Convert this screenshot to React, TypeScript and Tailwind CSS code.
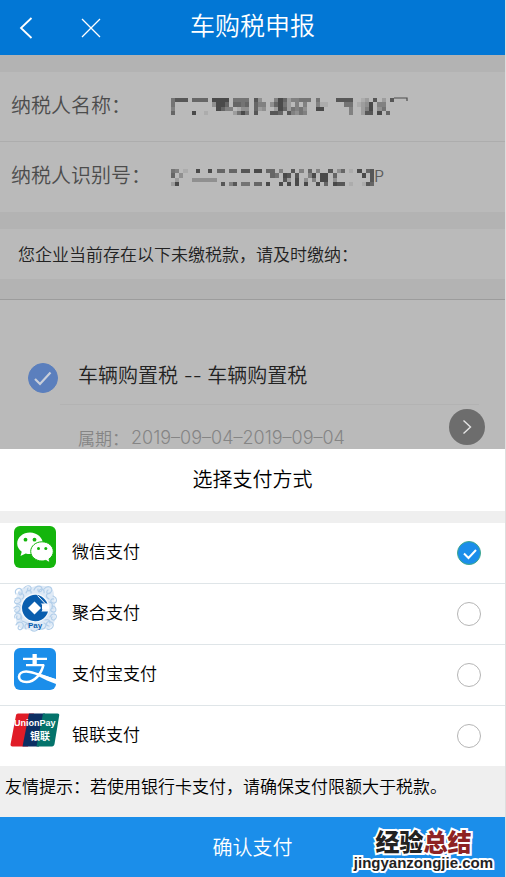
import { useState } from 'react';
import type { ReactNode } from 'react';

type MethodId = 'wechat' | 'ccb' | 'alipay' | 'unionpay';

// each digit is the darkness of one cell, a dot is an empty cell
const maskedName = [
  '5777.6666.8888.5555.73...486244555.5....7777..12.7.2.7',
  '5.........3886.6656.644.36852.4.4..411....55.1238.44..',
  '4..........8644.133.623..28625453..88......4..248.35..',
  '6....8..1......2585.7...776.74354..........4..277.8.6.',
];

const maskedNumber = [
  '54.1..8..8.66.66.77.88.66.4..7.4.6.4..7.36.1.8.67',
  '6.3.....................65.87.7..48.88.6......8.7',
  '.2...333333................72.8.3.4.88.3........7',
  '28..........7.47.55.66.8..8.8.8.8..8.6.877.1..176',
];

function Mosaic({ rows, className }: { rows: string[]; className: string }) {
  return (
    <svg
      viewBox={`0 0 ${rows[0].length} ${rows.length}`}
      preserveAspectRatio="none"
      shapeRendering="crispEdges"
      className={className}
      aria-hidden="true"
    >
      {rows.map((row, y) =>
        row.split('').map((c, x) =>
          c === '.' ? null : (
            <rect key={`${x}-${y}`} x={x} y={y} width="1" height="1" fill="#2e2e2e" fillOpacity={Number(c) * 0.1} />
          )
        )
      )}
    </svg>
  );
}

function WechatIcon() {
  return (
    <svg viewBox="0 0 42 42" className="w-[42px] h-[42px]" aria-hidden="true">
      <rect width="42" height="42" rx="6" fill="#14b50c" />
      <path
        d="M16 6.500C9 6.500 3.200 11.400 3.200 17.500c0 3.400 1.700 6.200 4.500 8.200L6.500 30l5.200-2.600c1.300.4 2.800.6 4.300.6 7 0 12.800-4.600 12.800-10.500S23 6.500 16 6.500Z"
        fill="#fff"
      />
      <path
        d="M28 15.800c-6.200 0-11.300 4.200-11.300 9.600S21.800 35 28 35c1.300 0 2.600-.2 3.800-.6l4.200 2.400-1-3.900c2.600-1.700 4.300-4.400 4.300-7.500 0-5.400-5-9.600-11.300-9.600Z"
        fill="#fff"
        stroke="#14b50c"
        strokeWidth="1"
      />
      <g fill="#14b50c">
        <circle cx="11.500" cy="13.700" r="1.900" />
        <circle cx="20.500" cy="13.700" r="1.900" />
        <circle cx="24.500" cy="22.500" r="1.500" />
        <circle cx="31.800" cy="22.500" r="1.500" />
      </g>
    </svg>
  );
}

function CcbIcon() {
  return (
    <svg viewBox="0 0 46 48" className="w-[46px] h-[48px]" aria-hidden="true">
      <path
        d="M8 6c4-4 8-2 12-3s10-2 16 0 6 5 6 9 2 8 1 12 1 8 0 12-4 9-9 9-9 2-14 1-10 0-13-3-3-7-3-11-1-8 0-12-1-10 4-14Z"
        fill="#dfeaf6"
      />
      <g fill="none" stroke="#b3cfea" strokeWidth="1.200" strokeLinecap="round">
        <path d="M4 10c-3-5 5-8 6-3s-4 5-3 1M12 4c3-4 8-2 7 1s-5 2-3-1M22 6c2-5 8-5 8-1s-5 3-4 0M32 5c4-5 10-1 7 3s-6 0-3-2" />
        <path d="M3 15c5-3 8 2 4 4s-6-2-3-3M2 24c4-4 8 0 5 3s-6 0-3-2M3 34c-2-5 6-7 6-2s-6 4-4 0M6 29c3 1 5 4 3 7" />
        <path d="M4 41c2-5 9-3 7 2s-7 2-4-1M14 45c-3-4 2-8 5-4M29 45c4 1 7-5 3-6M35 45c5 2 9-5 4-7s-6 4-2 4" />
        <path d="M41 12c5 2 4 8 0 7s-2-5 1-4M40 22c5 0 5 7 1 6s-2-4 0-4M38 33c2-5 8-3 6 1s-6 1-4-1M8 9c4 0 5 4 2 6M38 9c-4 0-5 4-1 6M10 37c3 1 5 1 6 4M33 36c3-1 5 0 5 3" />
        <path d="M14 9c1-4 6-3 5 0M27 8c0-4 6-4 5 1M5 20c4 0 5 3 4 5M37 18c3 0 4 3 3 6M19 46c3 2 6 1 7-1" />
      </g>
      <circle cx="23" cy="24" r="14.500" fill="#fff" fillOpacity="0.700" />
      {/* ring, open on the right, with a square hole */}
      <path
        d="M29 12.200A13.200 13.200 0 1 0 36 27.500h-7.500A6.800 6.800 0 0 1 16 24a6.800 6.800 0 0 1 12-4.500h7.500c-1.200-3-3.500-5.600-6.500-7.300Z"
        fill="#0a5eae"
      />
      <circle cx="22.500" cy="24" r="8" fill="#0a5eae" />
      <path d="m22.500 17.500 6.500 6.500-6.500 6.500-6.500-6.500Z" fill="#fff" />
      <path d="M30 21.500h7v3.500h-7Z" fill="#fff" />
      <path d="m25.500 11.500 9 9.500" stroke="#fff" strokeWidth="1" />
      <text x="23" y="43.500" textAnchor="middle" fontSize="8" fontWeight="bold" fill="#0a5eae" fontFamily="Liberation Sans, sans-serif">
        Pay
      </text>
    </svg>
  );
}

function AlipayIcon() {
  return (
    <svg viewBox="0 0 42 42" className="w-[42px] h-[42px]" aria-hidden="true">
      <rect width="42" height="42" rx="6" fill="#1b8eea" />
      <path d="M9 10.800h24M12 17.200h18" stroke="#fff" strokeWidth="2.200" />
      <path d="M18.500 6h4.300v11h-4.300Z" fill="#fff" />
      <path
        d="M29.500 16.500C27.500 26 20.500 34 12.500 34 7.500 34 5 31.600 5 28.700c0-3 3-5.200 7.200-5.200 6 0 14.500 3.600 29.800 9.500"
        fill="none"
        stroke="#fff"
        strokeWidth="2.600"
      />
      <path d="M24 25.500 42 31v5c-6-2-12-5-18-8Z" fill="#fff" />
    </svg>
  );
}

function UnionPayIcon() {
  return (
    <svg viewBox="0 0 50 34" className="w-[50px] h-[34px]" aria-hidden="true">
      <path d="M8 .5h16L18 33.500H2.500C1 33.500.3 32.500.6 31L6 2.300C6.300 1.200 7 .5 8 .5Z" fill="#e01c27" />
      <path d="M19 .5h16l-6 33H12.500Z" fill="#0c2f63" />
      <path d="M33 .5h14.500c1.300 0 2 .8 1.700 2L44.500 31c-.3 1.500-1.200 2.500-2.500 2.500H26.500Z" fill="#04736b" />
      <text x="4" y="13" fontSize="9" fontWeight="bold" fill="#fff" fontFamily="Liberation Sans, sans-serif">
        UnionPay
      </text>
      <text x="20" y="27" fontSize="10" fontWeight="bold" fill="#fff" fontFamily="Noto Sans CJK SC, sans-serif">
        银联
      </text>
    </svg>
  );
}

const methods: { id: MethodId; label: string; icon: ReactNode }[] = [
  { id: 'wechat', label: '微信支付', icon: <WechatIcon /> },
  { id: 'ccb', label: '聚合支付', icon: <CcbIcon /> },
  { id: 'alipay', label: '支付宝支付', icon: <AlipayIcon /> },
  { id: 'unionpay', label: '银联支付', icon: <UnionPayIcon /> },
];

function Header() {
  return (
    <header className="grid grid-cols-[1fr_auto_1fr] items-center h-[55px] bg-[#0277d5] text-white">
      <div className="flex items-center gap-10 pl-4">
        <button type="button" aria-label="返回" className="flex justify-center w-5">
          <svg viewBox="0 0 20 24" className="w-5 h-6" fill="none" stroke="currentColor" strokeWidth="1.800">
            <path d="M15.500 2 5 12l10.500 10" />
          </svg>
        </button>
        <button type="button" aria-label="关闭" className="flex justify-center w-[30px]">
          <svg viewBox="0 0 20 20" className="w-5 h-5" fill="none" stroke="currentColor" strokeWidth="1.300">
            <path d="m1 1 18 18M19 1 1 19" />
          </svg>
        </button>
      </div>
      <h1 className="pb-2 text-[25px] leading-8">车购税申报</h1>
      <div />
    </header>
  );
}

function TaxInfo() {
  const [selected, setSelected] = useState(true);

  return (
    <main className="relative bg-[#bababa]">
      <dl className="border-y-[17px] border-[#b3b3b3] text-xl text-[#4c4c4c]">
        <div className="flex items-center h-[70px] pl-[11px] border-b border-[#adadad]">
          <dt className="w-40 shrink-0 pb-1 leading-7">纳税人名称：</dt>
          <dd>
            <Mosaic rows={maskedName} className="w-[223px] h-[17px]" />
          </dd>
          <dd className="self-start pt-[25px]">
            <svg viewBox="0 0 14 4" className="w-3.5 h-1" fill="none" stroke="#4c4c4c" strokeWidth="1.200" aria-hidden="true">
              <path d="M0 1h13v3" />
            </svg>
          </dd>
        </div>
        <div className="flex items-center h-[70px] pl-[11px]">
          <dt className="w-40 shrink-0 pb-1 leading-7">纳税人识别号：</dt>
          <dd className="flex items-center">
            <Mosaic rows={maskedNumber} className="w-[203px] h-[17px]" />
            <span className="pb-1 text-base leading-4 text-[#5c5c5c]">P</span>
          </dd>
        </div>
      </dl>

      <p className="px-[18px] py-3 text-[17px] leading-[26px] text-[#222]">您企业当前存在以下未缴税款，请及时缴纳：</p>
      <div className="h-[21px] bg-[#b3b3b3] border-b border-[#9c9c9c]" />

      <section className="pt-[57px]">
        <label className="flex items-center pl-7">
          <span className="relative flex mt-1.5">
            <input
              type="checkbox"
              checked={selected}
              onChange={e => setSelected(e.target.checked)}
              className="peer appearance-none w-[30px] h-[30px] rounded-full border border-[#5b7fbd] checked:bg-[#5b7fbd]"
            />
            <svg
              viewBox="0 0 30 30"
              className="absolute inset-0 hidden peer-checked:block pointer-events-none"
              fill="none"
              stroke="#c9cfda"
              strokeWidth="2.200"
            >
              <path d="m7 16 5 5L22.500 9.500" />
            </svg>
          </span>
          <span className="pl-5 text-xl leading-7 text-[#222]">
            车辆购置税<span className="font-['Inter','Noto_Sans_CJK_SC',sans-serif]"> -- </span>车辆购置税
          </span>
        </label>
        <div className="ml-[60px] mr-[26px] mt-[11px] border-t border-[#b3b3b3]" />
        <p className="flex gap-0.5 pl-[78px] pt-5 h-11 text-[17px] leading-[26px] text-[#858585]">
          属期：
          <span className="text-lg leading-[26px] font-['Inter','Noto_Sans_CJK_SC',sans-serif]">2019–09–04–2019–09–04</span>
        </p>
      </section>

      <button
        type="button"
        aria-label="下一页"
        className="absolute right-5 bottom-1 flex items-center justify-center w-9 h-9 rounded-full bg-[#6d6d6d] text-[#e5e5e5]"
      >
        <svg viewBox="0 0 10 16" className="w-2.5 h-4" fill="none" stroke="currentColor" strokeWidth="1.400">
          <path d="m1.500 1.500 7 6.500-7 6.500" />
        </svg>
      </button>
    </main>
  );
}

function PaymentSheet() {
  const [method, setMethod] = useState<MethodId>('wechat');

  return (
    <form onSubmit={e => e.preventDefault()} className="bg-white text-black">
      <h2 className="pt-4 pb-[18px] text-xl leading-7 text-center">选择支付方式</h2>
      <div className="border-t-[12px] border-[#efefef]">
        {methods.map(m => (
          <label key={m.id} className="flex items-center h-[61px] pl-2.5 pr-6 border-b border-[#dfe5e8] last:border-[#efefef]">
            <span className="flex items-center justify-center w-[50px] pb-3">{m.icon}</span>
            <span className="flex-1 pl-3 pb-1 text-[17px] leading-6">{m.label}</span>
            <span className="relative flex">
              <input
                type="radio"
                name="method"
                value={m.id}
                checked={method === m.id}
                onChange={() => setMethod(m.id)}
                className="peer appearance-none w-6 h-6 rounded-full border border-[#b5b5b5] checked:border-[#3fa98c] checked:bg-[#1b8eea]"
              />
              <svg
                viewBox="0 0 24 24"
                className="absolute inset-0 hidden peer-checked:block pointer-events-none"
                fill="none"
                stroke="#fff"
                strokeWidth="2"
              >
                <path d="m7 12.500 4.500 4.500 7.500-8" />
              </svg>
            </span>
          </label>
        ))}
      </div>
      <p className="pl-[5px] pt-1.5 pb-[18px] bg-[#efefef] text-[17px] leading-[26px]">
        友情提示：若使用银行卡支付，请确保支付限额大于税款。
      </p>
      <div className="relative">
        <button type="submit" className="w-full h-[60px] bg-[#1b8eea] text-xl text-white">
          确认支付
        </button>
        <div className="absolute right-3 bottom-1.5 flex flex-col items-center pointer-events-none text-[#222] [-webkit-text-stroke:4px_white] [paint-order:stroke_fill]">
          <span className="text-2xl leading-7 font-black">
            经验<span className="text-[#8e2323]">总结</span>
          </span>
          <span className="text-[15px] leading-4 font-bold font-['Liberation_Sans',sans-serif]">jingyanzongjie.com</span>
        </div>
      </div>
    </form>
  );
}

export default function App() {
  return (
    <div className="min-h-screen border-r border-[#dedede] bg-white font-[350] font-['Noto_Sans_CJK_SC',sans-serif]">
      <Header />
      <TaxInfo />
      <PaymentSheet />
    </div>
  );
}
